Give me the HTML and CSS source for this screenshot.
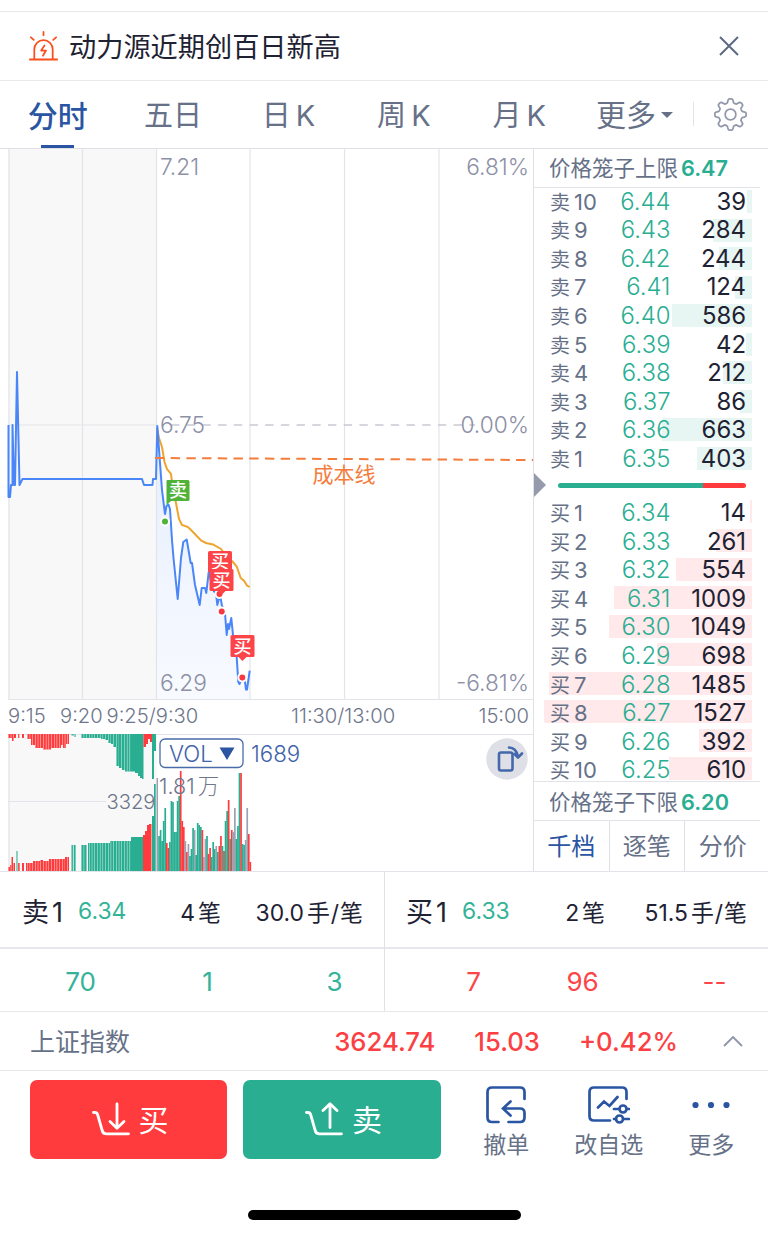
FILE: index.html
```
<!DOCTYPE html>
<html lang="zh-CN">
<head>
  <meta charset="UTF-8" />
  <meta name="viewport" content="width=device-width, initial-scale=1.0"/>
  <title>动力源 分时</title>
  <link rel="stylesheet" href="styles.css">
</head>
<body>
  <div class="notice">
    <svg class="alarm" viewBox="0 0 32 32" fill="none" stroke="#fa4f1c" stroke-width="1.8" stroke-linecap="round">
      <path d="M2 29.5H30" stroke-width="2"/>
      <path d="M6.5 29V19a9.5 9.5 0 0 1 19 0v10M16 1v3.500M3 6.500l3 2.600M29 6.500l-3 2.600"/>
      <path d="M17 15l-3.400 5.200h5L15.400 25.500" stroke-linejoin="round"/>
    </svg>
    <span class="notice-text">动力源近期创百日新高</span>
    <svg class="close" viewBox="0 0 20 20" fill="none" stroke="#5b6881" stroke-width="1.9"><path d="M1 1l18 18M19 1L1 19"/></svg>
  </div>

  <div class="tabs">
    <div class="tab active">分时</div>
    <div class="tab">五日</div>
    <div class="tab">日<i>K</i></div>
    <div class="tab">周<i>K</i></div>
    <div class="tab">月<i>K</i></div>
    <div class="tab more">更多<span class="caret"></span></div>
    <div class="setting">
      <svg viewBox="0 0 32 32" fill="none" stroke="#9298ab" stroke-width="1.7" stroke-linejoin="round">
        <path id="gear"/>
        <circle cx="16" cy="16" r="5.200"/>
      </svg>
    </div>
  </div>

  <div class="main">
    <svg class="chart" viewBox="0 149 533 722">
      <defs>
        <linearGradient id="fade" x1="0" y1="0" x2="0" y2="1">
          <stop offset="0" stop-color="#4a86f7" stop-opacity=".14"/>
          <stop offset="1" stop-color="#4a86f7" stop-opacity=".04"/>
        </linearGradient>
      </defs>
      <!-- 背景和网格 -->
      <path class="auction" d="M8 149h149v550H8zM8 734h149v137H8z"/>
      <path class="grid" d="M9 149v550M82.500 149v550M156.500 149v550M250 149v550M344.500 149v550M439 149v550M8 699.500h525M8 734.500h525M9 734v137M8 425h149M8 801.500h98"/>
      <path class="zero" d="M171 425h304"/>

      <!-- 均价和现价 -->
      <path fill="url(#fade)" d="M157 426L162 490 165 514 169 505 172 540 177.700 599 183 545 187 540 191 563 195 585 199.700 605 202 588 206 592 209 572 214 591 222 606 226.700 635 231 618 236.700 657 238.300 682 246 689 249.700 671V699H157z"/>
      <path class="avg" d="M157 428L159 438 162 447 164.500 462 167 469 171 474 173 490 176 503 179 519 182 525 188 527 192 531 201 540.500 206 543 213 544.500 221 549 226 556 233 562 236.700 566.500 240.700 578 244 580.700 247 585.500 249.700 587"/>
      <path class="price" d="M8.500 425V497H10L11 485H12.500V425L14 485H15L17 372 19.500 485 22.500 479H142L144 485H152.500L153 479H156L157.300 426 162 490 165 514 166.500 506 168.500 504.500 170 509 172 540 173.500 558 177.700 599 181 558 183.300 542 186.700 539.500 188.500 550 190.700 563H192L195 585 199.700 605 201.700 588H205L206.300 593 208.700 572 214 591.500 216 593 217.300 605 220 595 222 606 224.700 610 226.700 635 228 624 229 629 231.300 618 233 635 236.700 657 238.300 682 239.500 684 242.300 678 245 682 246 689.500H247L249.700 670.700"/>
      <path class="cost" d="M155 458L533 460"/>

      <g class="axis">
        <text x="160" y="175">7.21</text>
        <text x="160" y="433">6.75</text>
        <text x="160" y="691">6.29</text>
        <text x="529" y="175" text-anchor="end">6.81%</text>
        <text x="529" y="433" text-anchor="end">0.00%</text>
        <text x="529" y="691" text-anchor="end">-6.81%</text>
      </g>
      <text class="cost-text" x="312.500" y="481.500">成本线</text>

      <!-- 买卖点 -->
      <g>
        <path fill="#4fb239" d="M167 480h21q1.500 0 1.500 1.500v18q0 1.500-1.500 1.500h-17l-4.500 4v-24z"/>
        <text class="mark" x="178" y="497">卖</text>
        <circle class="dot sell" cx="165" cy="521.500" r="4"/>
        <circle class="dot" cx="219.500" cy="594" r="4"/>
        <path class="buy-flag" d="M209.500 551h21q1.500 0 1.500 1.500v18q0 1.500-1.500 1.500h-21q-1.500 0-1.500-1.500v-18q0-1.500 1.500-1.500z"/>
        <text class="mark" x="220" y="568">买</text>
        <path class="buy-flag" d="M211 569h21q1.500 0 1.500 1.500v19q0 1.500-1.500 1.500h-6.500l-4 4-4-4H211q-1.500 0-1.500-1.500v-19q0-1.500 1.500-1.500z"/>
        <text class="mark" x="221.500" y="586.500">买</text>
        <circle class="dot" cx="221.700" cy="611.500" r="4"/>
        <path class="buy-flag" d="M232 635h21q1.500 0 1.500 1.500v19q0 1.500-1.500 1.500h-6.500l-4 4-4-4H232q-1.500 0-1.500-1.500v-19q0-1.500 1.500-1.500z"/>
        <text class="mark" x="242.500" y="652.500">买</text>
        <circle class="dot" cx="242.300" cy="677.500" r="4"/>
      </g>

      <g class="time">
        <text x="8" y="723">9:15</text>
        <text x="60" y="723">9:20</text>
        <text x="106.500" y="723">9:25/9:30</text>
        <text x="291" y="723">11:30/13:00</text>
        <text x="529" y="723" text-anchor="end">15:00</text>
      </g>

      <g id="vol"></g>
      <g class="time">
        <text x="155.500" y="809" text-anchor="end">3329</text>
        <text class="vol-max" x="159" y="794">1.81<tspan dx="3">万</tspan></text>
      </g>
      <rect x="160" y="739" width="83" height="28.500" rx="5" fill="#fff" stroke="#4a6ba8" stroke-width="1.300"/>
      <text class="vol-text" x="169" y="761.500">VOL</text>
      <path fill="#2a55a2" d="M219.500 747.500h15l-7.500 12.500z"/>
      <text class="vol-text" x="251" y="761.500">1689</text>

      <circle cx="507" cy="759" r="20.700" fill="#dfe0e7"/>
      <g fill="none" stroke="#4468ab" stroke-width="2.600" stroke-linejoin="round" stroke-linecap="round">
        <rect x="499" y="752.500" width="13.500" height="18" rx="2"/>
        <path d="M509 747.500q7 0 9 9M514.500 754l3.500 3.500 4-4"/>
      </g>
    </svg>

    <div class="book">
      <div class="limit">价格笼子上限<b>6.47</b></div>
      <div class="rows sells" id="sells"></div>
      <div class="ratio"><span class="arrow"></span><span class="bar"></span></div>
      <div class="rows buys" id="buys"></div>
      <div class="limit bottom">价格笼子下限<b>6.20</b></div>
      <div class="book-tabs"><span class="on">千档</span><span>逐笔</span><span>分价</span></div>
    </div>
  </div>

  <div class="queue">
    <div class="half">
      <div class="queue-head"><b>卖<i>1</i></b><span class="green">6.34</span><span class="num">4<i>笔</i></span><span class="num">30.0<i>手/笔</i></span></div>
      <div class="queue-list green"><span>70</span><span>1</span><span>3</span></div>
    </div>
    <div class="half">
      <div class="queue-head"><b>买<i>1</i></b><span class="green">6.33</span><span class="num">2<i>笔</i></span><span class="num">51.5<i>手/笔</i></span></div>
      <div class="queue-list red"><span>7</span><span>96</span><span>--</span></div>
    </div>
  </div>

  <div class="index">
    <span class="index-name">上证指数</span>
    <span class="point">3624.74</span>
    <span class="change">15.03</span>
    <span class="percent">+0.42%</span>
    <svg viewBox="0 0 20 12" fill="none" stroke="#8f96a8" stroke-width="1.900"><path d="M1 11l9-9 9 9"/></svg>
  </div>

  <div class="actions">
    <button class="trade buy">
      <svg viewBox="0 0 38 34"><path d="M1.500 10.500h1.500q2 0 2.600 2l4.600 16q.9 3.300 4 3.300H36.500M25 2v24M18 19.500l7 6.800 7-6.800"/></svg><span>买</span>
    </button>
    <button class="trade sell">
      <svg viewBox="0 0 38 34"><path d="M1.500 10.500h1.500q2 0 2.600 2l4.600 16q.9 3.300 4 3.300H36.500M25 25.500V2M18 8.500l7-6.800 7 6.800"/></svg><span>卖</span>
    </button>
    <div class="tools">
      <div class="tool">
        <svg viewBox="0 0 40 38"><path d="M12.500 36H6q-4.500 0-4.500-4.500V6Q1.500 1.500 6 1.500h28q4.500 0 4.500 4.500v7M22.500 36H34q4.500 0 4.500-4.500V27q0-4.500-4.500-4.500H17M24.500 15.500l-7.500 7 7.500 7"/></svg>
        撤单
      </div>
      <div class="tool">
        <svg viewBox="0 0 42 38"><path d="M22 34.500H6q-4.500 0-4.500-4.500V6Q1.500 1.500 6 1.500h28q4.500 0 4.500 4.500v7M10 21.500l6-6 5.500 4.500 8-9M26 23h5M39 23h2M26 33h2M36 33h5"/><circle cx="35" cy="23" r="3.500"/><circle cx="31.500" cy="33" r="3.500"/></svg>
        改自选
      </div>
      <div class="tool">
        <svg viewBox="0 0 40 38"><g fill="#2a55a2" stroke="none"><circle cx="4.500" cy="19" r="3.100"/><circle cx="20" cy="19" r="3.100"/><circle cx="35.500" cy="19" r="3.100"/></g></svg>
        更多
      </div>
    </div>
  </div>
  <div class="home-bar"></div>

  <script>
    const sells = [[6.44, 39], [6.43, 284], [6.42, 244], [6.41, 124], [6.40, 586], [6.39, 42], [6.38, 212], [6.37, 86], [6.36, 663], [6.35, 403]];
    const buys = [[6.34, 14], [6.33, 261], [6.32, 554], [6.31, 1009], [6.30, 1049], [6.29, 698], [6.28, 1485], [6.27, 1527], [6.26, 392], [6.25, 610]];
    const maxCount = 1527;

    function renderRows(id, list, name) {
      document.getElementById(id).innerHTML = list.map(([price, count], i) => {
        const level = name === '卖' ? 10 - i : i + 1;
        const width = (count / maxCount * 208.5).toFixed(1);
        return `<div class="row"><span class="depth" style="width:${width}px"></span>
          <span class="level">${name}<i>${level}</i></span>
          <span class="price-text">${price.toFixed(2)}</span>
          <span class="count">${count}</span></div>`;
      }).join('');
    }
    renderRows('sells', sells, '卖');
    renderRows('buys', buys, '买');

    // 集合竞价: [x开始, x结束, 高度, 颜色]
    const R = '#ff3b3d', G = '#29ae92', N = '#9ca2b3';
    const unmatched = [
      [8, 12, 4, R], [12, 14, 7, R], [14, 16, 4, R], [18, 19.5, 4, R], [22, 24, 4, R], [27, 31, 5, R],
      [31, 35, 11, R], [35, 43, 14, R], [43, 51, 15.5, R], [51, 61, 14, R], [61, 63, 11, R], [63, 66, 14, R], [66, 69, 10, R],
      [71.5, 74, 1.5, G], [74.5, 76, 3, G], [81, 101, 4, G], [101, 105, 5, G], [105, 108, 6, G], [108, 111, 9, G],
      [111, 113, 10, G], [113, 116, 13, G], [116, 119, 32, G], [119, 122, 34, G], [122, 125, 36, G], [125, 135, 37.5, G],
      [135, 138, 39, G], [138, 140, 42, G], [140, 142, 44, G], [142, 143.5, 45, G], [143.5, 146, 13, R], [146, 148, 10, R],
      [148, 150, 5, R], [150, 152, 8, R], [152, 154, 45, G], [154, 156, 17, G]
    ];
    const matched = [
      [8, 10, 4, R], [10, 11.5, 6, R], [11.5, 13, 14, R], [13, 15, 8, R], [16, 17.5, 20, G], [18, 20, 8, R], [22, 24, 8, R],
      [26, 33, 8, R], [33, 40, 10, R], [40, 43, 11, R], [43, 49, 10, R], [49, 65, 12, R], [65, 69, 14, R],
      [71.5, 73.5, 26, G], [74, 76, 26, G], [81, 87, 26, G], [88, 110, 28, G], [110, 131, 30, G], [131, 143, 34, G],
      [143, 145, 36, R], [145, 147, 40, R], [147, 149, 46, R], [149, 151.5, 47, R], [152, 154, 55, G], [154, 155.7, 87, G], [156.5, 158, 93, N]
    ];
    // 每分钟成交量
    const minutes = 'g35 g41 g30 g50 g63 r28 r23 g29 g70 g69 g39 g39 g70 g75 r100 r50 r44 n30 r19 n27 g15 g22 g43 n41 g16 g48 g46 g44 r41 n14 n32 g35 r17 r23 g14 g29 g22 n25 g19 r25 r35 g25 r20 g50 g60 r71 g32 r41 n39 n63 g32 g45 g98 r98 g27 g26 n31 n63 r37 r9'.split(' ');

    const parts = [];
    function addBar(x, y, w, h, c) {
      parts.push(`<rect x="${x.toFixed(2)}" y="${y}" width="${w}" height="${h}" fill="${c}"/>`);
    }
    function addRun(run, up) {
      const [from, to, h, c] = run;
      const y = up ? 871 - h : 734;
      addBar(from, y, to - from, h, c);
      // 柱子间的缝
      for (let x = Math.ceil(from / 2.7) * 2.7; x < Math.min(to, 130); x += 2.7) addBar(x, y, 0.45, h, '#f8f8f8');
    }
    unmatched.forEach(r => addRun(r, false));
    matched.forEach(r => addRun(r, true));
    minutes.forEach((m, i) => {
      const h = +m.slice(1);
      addBar(158.2 + i * 1.547, 871 - h, 1.7, h, { r: R, g: G, n: N }[m[0]]);
    });
    document.getElementById('vol').innerHTML = parts.join('');

    // 齿轮
    let d = '';
    for (let i = 0; i <= 96; i++) {
      const a = i / 96 * Math.PI * 2;
      const r = 13.3 + 1.9 * Math.tanh(2.6 * Math.cos(a * 8));
      d += (i ? 'L' : 'M') + (16 + r * Math.sin(a)).toFixed(2) + ' ' + (16 - r * Math.cos(a)).toFixed(2);
    }
    document.getElementById('gear').setAttribute('d', d + 'z');
  </script>
</body>
</html>
```
FILE: styles.css
```
* {
  box-sizing: border-box;
}
body {
  margin: 0;
  padding-top: 11px;
  width: 768px;
  height: 1237px;
  overflow: hidden;
  background: #fff;
  font-family: Inter, "Noto Sans CJK SC", sans-serif;
  color: #1e2233;
}
i {
  font-style: normal;
}
svg {
  display: block;
}
.green {
  color: #35b398;
}
.red {
  color: #fc4548;
}
.notice {
  display: flex;
  align-items: center;
  height: 69px;
  padding: 0 29px 0 28px;
  border-top: 1px solid #e8e8ec;
}
.alarm {
  width: 31px;
  height: 31px;
}
.notice-text {
  flex: 1;
  margin-left: 10px;
  padding-bottom: 2px;
  font-size: 27.2px;
}
.close {
  width: 20px;
  height: 20px;
}
.tabs {
  display: flex;
  height: 69px;
  border-top: 1px solid #e8e8ec;
  border-bottom: 1px solid #dfe0e5;
  font-size: 29px;
  line-height: 70px;
  color: #667188;
}
.tab {
  width: 115.4px;
  height: 67px;
  text-align: center;
  position: relative;
  white-space: nowrap;
}
.tab i {
  margin-left: 5px;
}
.tab.active {
  color: #2a55a2;
  font-weight: 500;
  font-size: 30px;
}
.tab.active::after {
  content: "";
  position: absolute;
  left: 41px;
  bottom: 0;
  width: 33px;
  height: 3px;
  background: #2a55a2;
}
.tab.more {
  display: flex;
  align-items: center;
  width: 97px;
  margin-left: 19px;
  font-size: 30px;
}
.caret {
  margin-left: 5px;
  border: 6px solid transparent;
  border-top-color: #667188;
  border-bottom: 0;
}
.setting {
  display: flex;
  align-items: center;
  height: 24px;
  margin-top: 21px;
  padding-left: 20px;
  border-left: 1px solid #e3e4e9;
}
.setting svg {
  width: 33px;
  height: 33px;
}
.main {
  display: flex;
  height: 722px;
}
.chart {
  width: 533px;
  height: 722px;
  flex: none;
}
.auction {
  fill: #f8f8f8;
}
.grid {
  stroke: #e3e4ea;
  stroke-width: 1.2;
}
.zero {
  stroke: #c8c9d3;
  stroke-width: 1.7;
  stroke-dasharray: 8.4 7.3;
}
.price {
  fill: none;
  stroke: #4a86f7;
  stroke-width: 2;
  stroke-linejoin: round;
}
.avg {
  fill: none;
  stroke: #efa42d;
  stroke-width: 2;
}
.cost {
  stroke: #f47d3e;
  stroke-width: 2;
  stroke-dasharray: 9.4 6.3;
}
.axis {
  font-size: 22.7px;
  font-weight: 300;
  fill: #8d90a6;
}
.time {
  font-size: 20.2px;
  font-weight: 300;
  fill: #6e768b;
}
.vol-max {
  font-size: 21.5px;
}
.vol-text {
  font-size: 22.3px;
  font-weight: 350;
  fill: #3d63aa;
}
.cost-text {
  font-size: 21px;
  fill: #f47d3e;
}
.mark {
  font-size: 18px;
  font-weight: 500;
  fill: #fff;
  text-anchor: middle;
}
.buy-flag {
  fill: #fc4449;
}
.dot {
  fill: #f8393f;
  stroke: #fff;
  stroke-width: 2;
}
.dot.sell {
  fill: #4fb239;
}
.book {
  flex: 1;
  border-left: 1px solid #dfe0e5;
}
.limit {
  height: 39px;
  margin-right: 8px;
  padding-left: 15px;
  border-bottom: 1px solid #e3e4e9;
  font-size: 21.5px;
  line-height: 38px;
  color: #667188;
  white-space: nowrap;
}
.limit b {
  margin-left: 3px;
  font-size: 21.7px;
  font-weight: 600;
  color: #29ae92;
}
.limit.bottom {
  height: 40px;
  margin-top: -3px;
  border-top: 1px solid #e3e4e9;
  line-height: 40px;
}
.sells {
  margin-top: -1px;
}
.row {
  position: relative;
  display: flex;
  align-items: center;
  height: 28.55px;
  padding: 0 22px 0 16px;
  font-size: 23.9px;
}
.row span {
  position: relative;
}
.row .depth {
  position: absolute;
  right: 16px;
  top: 3px;
  height: 23px;
  background: #e7f6f2;
}
.buys .depth {
  top: 2px;
  background: #ffe9ea;
}
.level {
  width: 60px;
  font-size: 20px;
  color: #667188;
}
.level i {
  margin-left: 4px;
  font-size: 22px;
}
.price-text {
  width: 60.5px;
  text-align: right;
  font-weight: 300;
  color: #29ae92;
}
.count {
  flex: 1;
  text-align: right;
}
.ratio {
  display: flex;
  align-items: center;
  height: 26px;
}
.arrow {
  border: 12px solid transparent;
  border-left-color: #959bac;
  border-right: 0;
}
.bar {
  width: 188px;
  height: 4.5px;
  margin-left: 12px;
  border-radius: 3px;
  background: linear-gradient(90deg, #29ae92 77.3%, #ff3b3d 77.3%);
}
.book-tabs {
  display: flex;
  height: 50px;
  font-size: 24px;
  line-height: 52px;
  color: #667188;
}
.book-tabs span {
  width: 75.5px;
  height: 50px;
  text-align: center;
  border-right: 1px solid #dfe0e5;
}
.book-tabs span:last-child {
  border: 0;
}
.book-tabs .on {
  color: #2a55a2;
}
.queue {
  display: flex;
  height: 140px;
  border-top: 1px solid #e3e4e9;
}
.half {
  width: 384px;
}
.half + .half {
  border-left: 1px solid #e0e1e6;
}
.queue-head {
  display: grid;
  grid-template-columns: 56px 50px 93px 1fr;
  align-items: center;
  height: 77px;
  padding: 2px 21px 0 22px;
  border-bottom: 2px solid #e8e8ec;
  font-size: 22.9px;
}
.queue-head .green {
  padding-top: 1px;
}
.half + .half .queue-head {
  padding-left: 21px;
}
.queue-head b {
  font-size: 27px;
  font-weight: 400;
}
.queue-head b i {
  margin-left: 3px;
}
.num {
  text-align: right;
  white-space: nowrap;
}
.num i {
  margin-left: 3px;
  letter-spacing: 1px;
  margin-right: -1px;
}
.queue-list {
  display: grid;
  grid-template-columns: 127px 127px 127px;
  height: 62px;
  padding-left: 17px;
  line-height: 66px;
  font-size: 26px;
  text-align: center;
}
.queue-list.red {
  grid-template-columns: 109px 109px 155px;
  padding-left: 34px;
}
.index {
  display: flex;
  align-items: center;
  height: 59px;
  padding: 0 25px 0 30px;
  border-top: 1px solid #e8e8ec;
  font-size: 25.7px;
  font-weight: 450;
  color: #fc3f43;
}
.index-name {
  flex: 1;
  padding-bottom: 2px;
  font-size: 25px;
  font-weight: 400;
  color: #667188;
}
.change {
  margin-left: 39px;
}
.percent {
  margin-left: 39px;
}
.index svg {
  width: 20px;
  height: 12px;
  margin-left: 45px;
}
.actions {
  display: flex;
  height: 140px;
  padding: 9px 0 0 30px;
  border-top: 1px solid #e8e8ec;
}
.trade {
  display: flex;
  align-items: center;
  justify-content: center;
  gap: 9px;
  width: 197px;
  height: 79px;
  margin-right: 16px;
  padding: 0 0 0 3px;
  border: 0;
  border-radius: 7px;
  background: #ff3b3d;
  color: #fff;
  font-family: inherit;
  font-size: 30px;
}
.trade span {
  padding-bottom: 3px;
}
.trade.sell {
  width: 198px;
  margin-right: 0;
  background: #29ae92;
}
.trade svg {
  width: 38px;
  height: 34px;
  margin-bottom: 2px;
  fill: none;
  stroke: #fff;
  stroke-width: 2.8;
  stroke-linecap: round;
  stroke-linejoin: round;
}
.tools {
  display: flex;
  margin-left: 14px;
}
.tool {
  width: 102.5px;
  padding-top: 6px;
  text-align: center;
  font-size: 23px;
  line-height: 42px;
  color: #667188;
}
.tool svg {
  width: 40px;
  height: 38px;
  margin: 0 auto;
  fill: none;
  stroke: #2a55a2;
  stroke-width: 2.7;
  stroke-linecap: round;
}
.tool:nth-child(2) svg {
  width: 42px;
}
.home-bar {
  width: 273px;
  height: 10px;
  margin: 0 auto;
  border-radius: 5px;
  background: #000;
}
```
